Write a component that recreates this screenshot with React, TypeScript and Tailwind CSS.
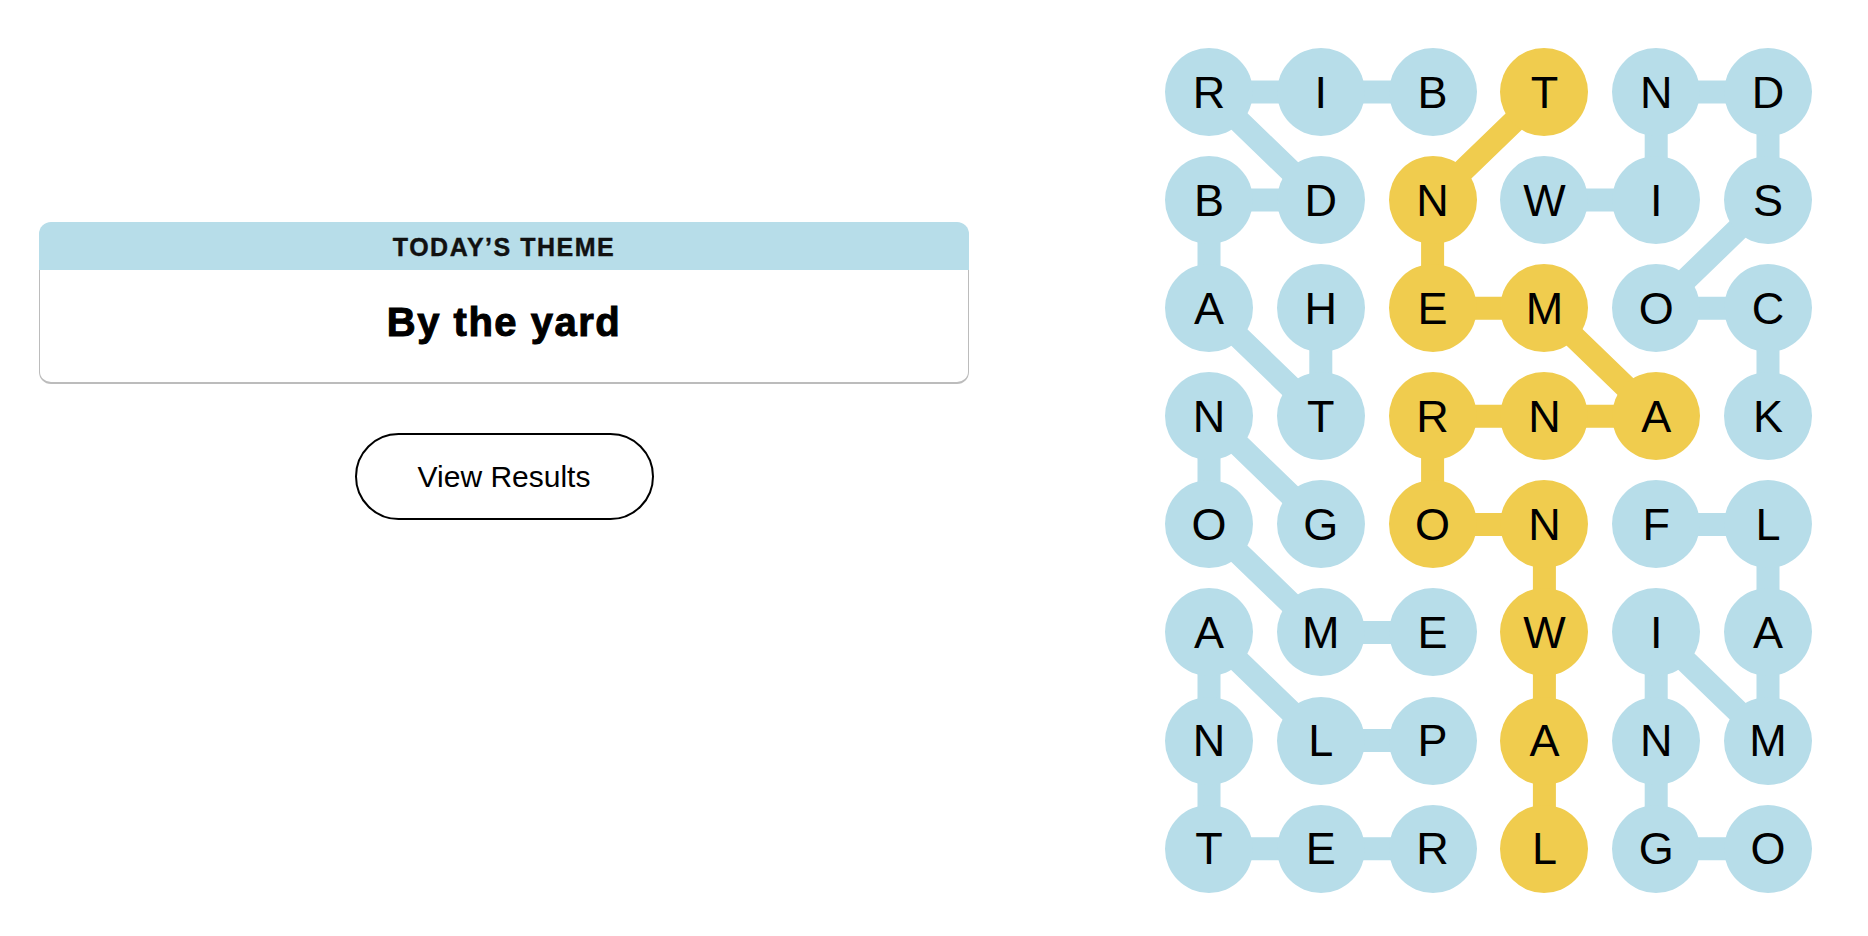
import React from "react";

const GRID = [
  "RIBTND",
  "BDNWIS",
  "AHEMOC",
  "NTRNAK",
  "OGONFL",
  "AMEWIA",
  "NLPANM",
  "TERLGO",
];

type P = [number, number];

const BLUE_WORDS: P[][] = [
  [[0, 2], [0, 1], [0, 0], [1, 1], [1, 0], [2, 0], [3, 1], [2, 1]],
  [[1, 3], [1, 4], [0, 4], [0, 5], [1, 5], [2, 4], [2, 5], [3, 5]],
  [[4, 1], [3, 0], [4, 0], [5, 1], [5, 2]],
  [[6, 2], [6, 1], [5, 0], [6, 0], [7, 0], [7, 1], [7, 2]],
  [[4, 4], [4, 5], [5, 5], [6, 5], [5, 4], [6, 4], [7, 4], [7, 5]],
];

const SPANGRAM: P[] = [
  [7, 3], [6, 3], [5, 3], [4, 3], [4, 2], [3, 2], [3, 3], [3, 4], [2, 3], [2, 2], [1, 2], [0, 3],
];

const BLUE = "#b7dde9";
const YELLOW = "#f0cc4e";
const D = 88;
const PX = 111.8;
const PY = 108.1;

const cx = (c: number) => D / 2 + c * PX;
const cy = (r: number) => D / 2 + r * PY;

const spangramSet = new Set(SPANGRAM.map(([r, c]) => `${r}-${c}`));

function Path({ pts, color }: { pts: P[]; color: string }) {
  const d = pts.map(([r, c], i) => `${i === 0 ? "M" : "L"}${cx(c)} ${cy(r)}`).join(" ");
  return <path d={d} stroke={color} strokeWidth={23} fill="none" strokeLinejoin="round" />;
}

function Board() {
  const W = D + 5 * PX;
  const H = D + 7 * PY;
  return (
    <div className="relative w-[647px] h-[845px]">
      <svg className="absolute inset-0" width={W} height={H} viewBox={`0 0 ${W} ${H}`}>
        {BLUE_WORDS.map((w, i) => (
          <Path key={i} pts={w} color={BLUE} />
        ))}
        <Path pts={SPANGRAM} color={YELLOW} />
      </svg>
      <div className="relative grid grid-cols-[repeat(6,88px)] gap-x-[23.8px] gap-y-[20.1px]">
        {GRID.flatMap((row, r) =>
          row.split("").map((ch, c) => {
            const yellow = spangramSet.has(`${r}-${c}`);
            return (
              <div
                key={`${r}-${c}`}
                className={
                  "w-[88px] h-[88px] rounded-full flex items-center justify-center text-[45px] leading-none text-black " +
                  (yellow ? "bg-[#f0cc4e]" : "bg-[#b7dde9]")
                }
              >
                <span className="translate-y-[0px]">{ch}</span>
              </div>
            );
          })
        )}
      </div>
    </div>
  );
}

export default function App() {
  return (
    <div
      className="w-[1868px] h-[936px] bg-white flex"
      style={{ fontFamily: '"Liberation Sans", Arial, sans-serif' }}
    >
      <div className="ml-[39px] mt-[222px] w-[930px] flex flex-col items-center">
        <div className="w-full">
          <div className="h-[48px] rounded-t-[12px] bg-[#b7dde9] flex items-center justify-center">
            <span className="text-[25px] font-bold tracking-[1.5px] text-[#111] leading-none translate-y-[1px] [-webkit-text-stroke:0.4px_#111]">
              TODAY’S THEME
            </span>
          </div>
          <div className="h-[114px] rounded-b-[12px] border-x-[1.5px] border-b-[2px] border-[#bcbcbc] flex justify-center pt-[32px]">
            <span className="text-[40px] font-bold tracking-[1.5px] leading-none text-black [-webkit-text-stroke:1px_black]">
              By the yard
            </span>
          </div>
        </div>
        <button className="mt-[49px] w-[299px] h-[87px] rounded-full border-2 border-black bg-white flex items-center justify-center text-[30px] text-black leading-none">
          View Results
        </button>
      </div>
      <div className="ml-[196px] mt-[48px]">
        <Board />
      </div>
    </div>
  );
}
